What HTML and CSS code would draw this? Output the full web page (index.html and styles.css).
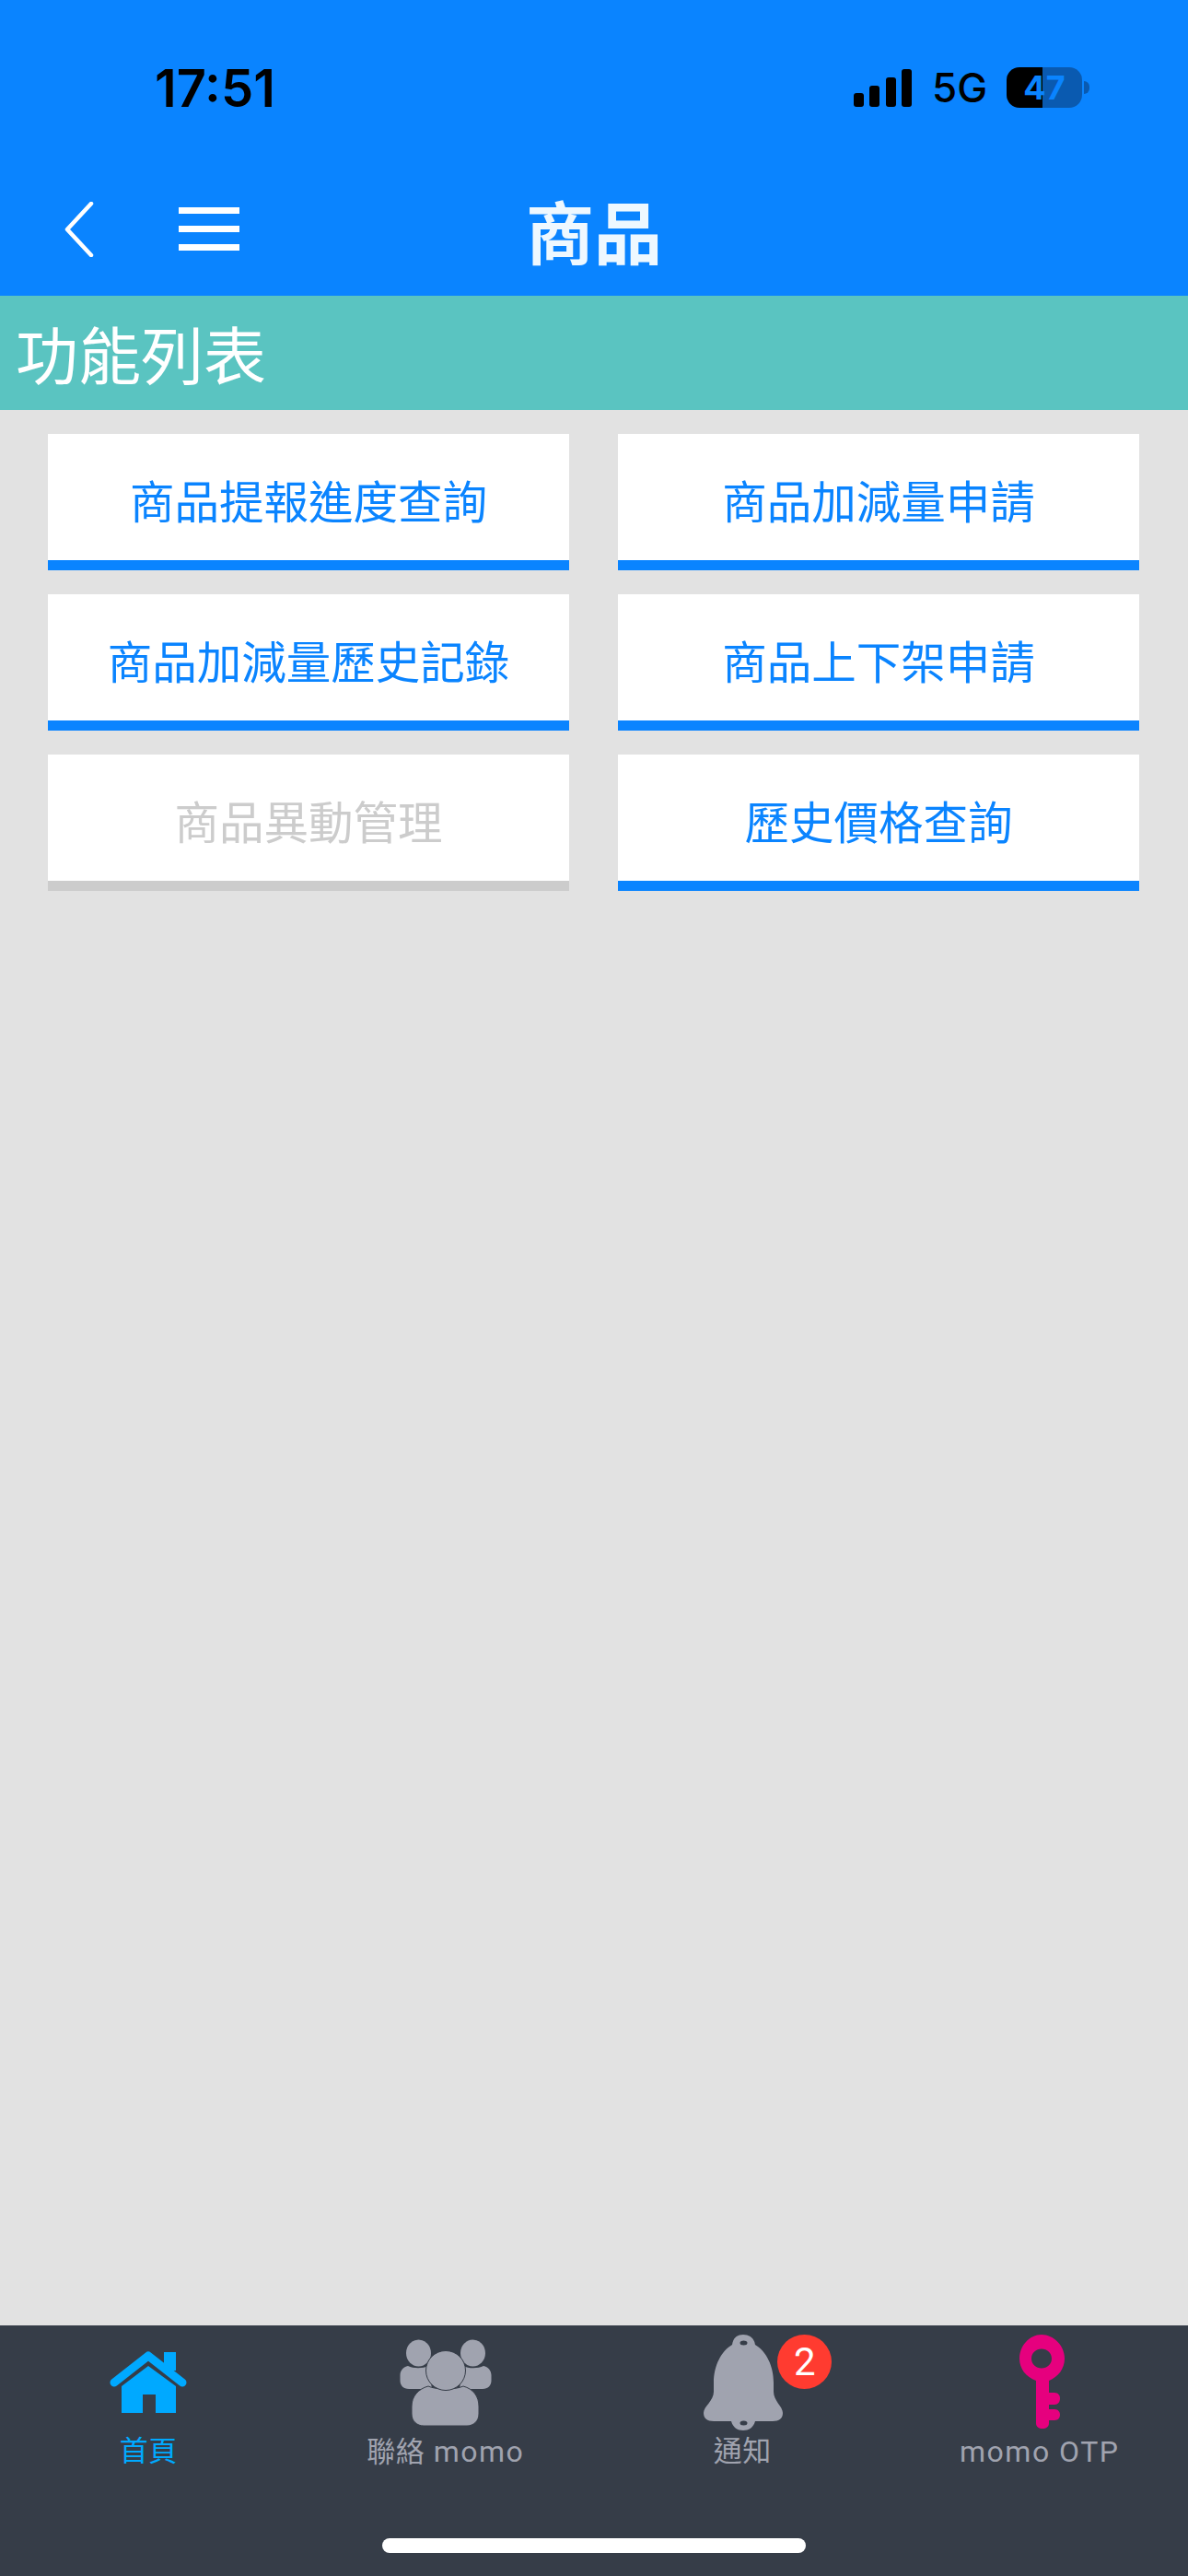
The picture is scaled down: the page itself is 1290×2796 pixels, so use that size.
FILE: index.html
```html
<!DOCTYPE html>
<html lang="zh-Hant">
<head>
    <meta charset="UTF-8">
    <meta name="viewport" content="width=device-width, initial-scale=1.0">
    <title>商品</title>
    <link rel="stylesheet" href="styles.css">
</head>
<body>
    <div class="app">
        <div class="status-bar">
            <span class="time">17:51</span>
            <div class="status-right">
                <div class="signal">
                    <i class="bar1"></i><i class="bar2"></i><i class="bar3"></i><i class="bar4"></i>
                </div>
                <span class="network">5G</span>
                <div class="battery">47</div>
            </div>
        </div>

        <header class="header">
            <div class="header-left">
                <svg class="back-icon" width="32" height="60" viewBox="0 0 32 60">
                    <path d="M29 2 L3 30 L29 58" fill="none" stroke="#fff" stroke-width="4.5" stroke-linecap="round" stroke-linejoin="round"/>
                </svg>
                <div class="menu-icon"><i></i><i></i><i></i></div>
            </div>
            <h1 class="title">商品</h1>
        </header>

        <div class="section-title">功能列表</div>

        <main class="content">
            <div class="menu-grid">
                <a class="menu-btn">商品提報進度查詢</a>
                <a class="menu-btn">商品加減量申請</a>
                <a class="menu-btn">商品加減量歷史記錄</a>
                <a class="menu-btn">商品上下架申請</a>
                <a class="menu-btn disabled">商品異動管理</a>
                <a class="menu-btn">歷史價格查詢</a>
            </div>
        </main>

        <nav class="tabbar">
            <div class="tabs">
                <div class="tab active">
                    <svg class="tab-icon" viewBox="0 0 110 108">
                        <rect x="72" y="19" width="13" height="20" fill="#00a9ff"/>
                        <path d="M18 52 L55 23 L92 52" fill="none" stroke="#00a9ff" stroke-width="9" stroke-linecap="round" stroke-linejoin="round"/>
                        <path fill-rule="evenodd" fill="#00a9ff" d="M26 85 L26 56 L55 34 L85 56 L85 85 Z M49 85 L63 85 L63 65 L49 65 Z"/>
                    </svg>
                    <span class="cjk">首頁</span>
                </div>
                <div class="tab">
                    <svg class="tab-icon" viewBox="0 0 110 108">
                        <ellipse cx="25.5" cy="20" rx="13.5" ry="14.5" fill="#a0a3af"/>
                        <ellipse cx="84.5" cy="20" rx="13.5" ry="14.5" fill="#a0a3af"/>
                        <path d="M14 34 C20 37 30 37 36 34 L40 59 L15 59 C9 59 5.500 55 5.500 50 L5.500 44 C5.500 39 9 35 14 34 Z" fill="#a0a3af"/>
                        <path d="M96 34 C90 37 80 37 74 34 L70 59 L95 59 C101 59 104.500 55 104.500 50 L104.500 44 C104.500 39 101 35 96 34 Z" fill="#a0a3af"/>
                        <path d="M36 56 C44 60 66 60 74 56 C85 59 91 67 91 78 L91 86 C91 94 85 99 78 99 L31 99 C24 99 18 94 18 86 L18 78 C18 67 25 59 36 56 Z" fill="#a0a3af" stroke="#363d48" stroke-width="1"/>
                        <ellipse cx="55" cy="39" rx="21.500" ry="21.500" fill="#a0a3af" stroke="#363d48" stroke-width="1"/>
                    </svg>
                    <span><span class="cjk">聯絡</span> momo</span>
                </div>
                <div class="tab">
                    <svg class="tab-icon" viewBox="0 0 110 108">
                        <path fill="#a0a3af" d="M56 0 C49 0 45 4 44 11 C32 18 24 34 24 52 L24 62 C24 72 13 78 13 85 C13 91 17 94 24 94 L43 94 C45 101 50 104 56 104 C62 104 67 101 69 94 L88 94 C95 94 99 91 99 85 C99 78 89 72 89 62 L89 52 C89 34 81 18 69 11 C68 4 63 0 56 0 Z"/>
                        <ellipse cx="56.500" cy="9" rx="4" ry="2.500" fill="#363d48"/>
                        <ellipse cx="56.500" cy="96" rx="4" ry="2.500" fill="#363d48"/>
                    </svg>
                    <span class="cjk">通知</span>
                    <b class="badge">2</b>
                </div>
                <div class="tab">
                    <svg class="tab-icon" viewBox="0 0 110 108">
                        <path fill="#e6007e" fill-rule="evenodd" d="M57 0 C44 0 33 12 33 26 C33 37 40 46 51 50 L51 96 C51 100 54 102 58 102 C62 102 65 100 65 96 L65 93 L71 93 C75 93 77 90 77 87 C77 84 75 81 71 81 L65 81 L65 76 L71 76 C75 76 77 73 77 69 C77 66 75 63 71 63 L65 63 L65 50 C75 46 82 37 82 26 C82 12 70 0 57 0 Z M57 15.500 C63 15.500 68 20 68 26 C68 32 63 36.500 57 36.500 C51 36.500 46 32 46 26 C46 20 51 15.500 57 15.500 Z"/>
                    </svg>
                    <span>momo OTP</span>
                </div>
            </div>
            <div class="home-bar"></div>
        </nav>
    </div>
</body>
</html>
```

FILE: styles.css
```css
* {
    box-sizing: border-box;
}
body {
    margin: 0;
    font-family: "Noto Sans CJK TC", "Noto Sans", sans-serif;
    background-color: #e2e2e2;
}
.app {
    width: 1290px;
    height: 2796px;
    display: flex;
    flex-direction: column;
}

/* status bar */
.status-bar {
    height: 160px;
    background: #0a84ff;
    display: flex;
    justify-content: space-between;
    align-items: flex-start;
    padding: 73px 115px 0 168px;
    font-family: Inter, "Liberation Sans", sans-serif;
    color: #000;
}
.time {
    font-size: 56px;
    font-weight: 600;
    line-height: 46px;
}
.status-right {
    display: flex;
    align-items: flex-start;
}
.signal {
    display: flex;
    align-items: flex-end;
    gap: 6.500px;
    height: 41px;
    margin-top: 2px;
}
.signal i {
    display: block;
    width: 11px;
    background: #000;
    border-radius: 3px;
}
.bar1 { height: 15px; }
.bar2 { height: 23px; }
.bar3 { height: 32px; }
.bar4 { height: 41px; }
.network {
    width: 58px;
    margin-left: 22px;
    font-size: 44px;
    font-weight: 500;
    line-height: 44px;
    white-space: nowrap;
}
.battery {
    position: relative;
    width: 82px;
    height: 44px;
    margin-left: 23px;
    border-radius: 14px;
    background: linear-gradient(90deg, #000 39px, #0a5ab0 39px);
    color: #0a84ff;
    font-size: 36px;
    font-weight: 700;
    line-height: 44px;
    text-align: center;
}
.battery::after {
    content: "";
    position: absolute;
    left: 84px;
    top: 15px;
    width: 6px;
    height: 14px;
    background: #0a5ab0;
    border-radius: 0 7px 7px 0;
}

/* header */
.header {
    height: 161px;
    background: #0a84ff;
    display: grid;
    grid-template-columns: 1fr auto 1fr;
    align-items: center;
    padding-top: 16px;
    color: #fff;
}
.header-left {
    display: flex;
    align-items: center;
    gap: 92px;
    padding-left: 70px;
}
.back-icon {
    display: block;
}
.menu-icon {
    display: flex;
    flex-direction: column;
    gap: 13px;
    width: 66px;
}
.menu-icon i {
    display: block;
    height: 7px;
    background: #fff;
}
.title {
    margin: 0;
    font-size: 74px;
    font-weight: 700;
    line-height: 80px;
    color: #eef8ff;
}

/* section */
.section-title {
    height: 124px;
    background: #5ac4c1;
    color: #fff;
    font-size: 68px;
    line-height: 124px;
    padding-left: 17px;
}
.content {
    flex: 1;
    padding: 26px 53px 0 52px;
}
.menu-grid {
    display: grid;
    grid-template-columns: 566px 566px;
    gap: 26px 53px;
}
.menu-btn {
    display: flex;
    align-items: center;
    justify-content: center;
    height: 148px;
    padding-top: 5px;
    background: #fff;
    border-bottom: 11px solid #0a84ff;
    color: #0a84ff;
    font-size: 48.500px;
    white-space: nowrap;
}
.menu-btn.disabled {
    border-bottom-color: #cccccc;
    color: #cccccc;
}

/* bottom tabs */
.tabbar {
    height: 272px;
    background: #363d48;
    padding-top: 10px;
}
.tabs {
    display: grid;
    grid-template-columns: repeat(4, 1fr);
}
.tab {
    position: relative;
    display: flex;
    flex-direction: column;
    align-items: center;
    color: #a0a3af;
    font-size: 32px;
    line-height: 38px;
    font-family: Roboto, "Noto Sans CJK TC", sans-serif;
    letter-spacing: 1.500px;
}
.tab .cjk {
    font-size: 31px;
    letter-spacing: 0.500px;
}
.tab.active {
    color: #00a9ff;
}
.tab-icon {
    display: block;
    width: 110px;
    height: 108px;
}
.badge {
    position: absolute;
    top: 0;
    left: calc(50% + 38px);
    width: 59px;
    height: 59px;
    border-radius: 50%;
    background: #ff3b30;
    color: #fff;
    font-size: 42px;
    font-weight: 400;
    line-height: 59px;
    letter-spacing: 0;
    text-align: center;
}
.home-bar {
    width: 460px;
    height: 16px;
    margin: 74px auto 0;
    background: #fff;
    border-radius: 8px;
}
```
